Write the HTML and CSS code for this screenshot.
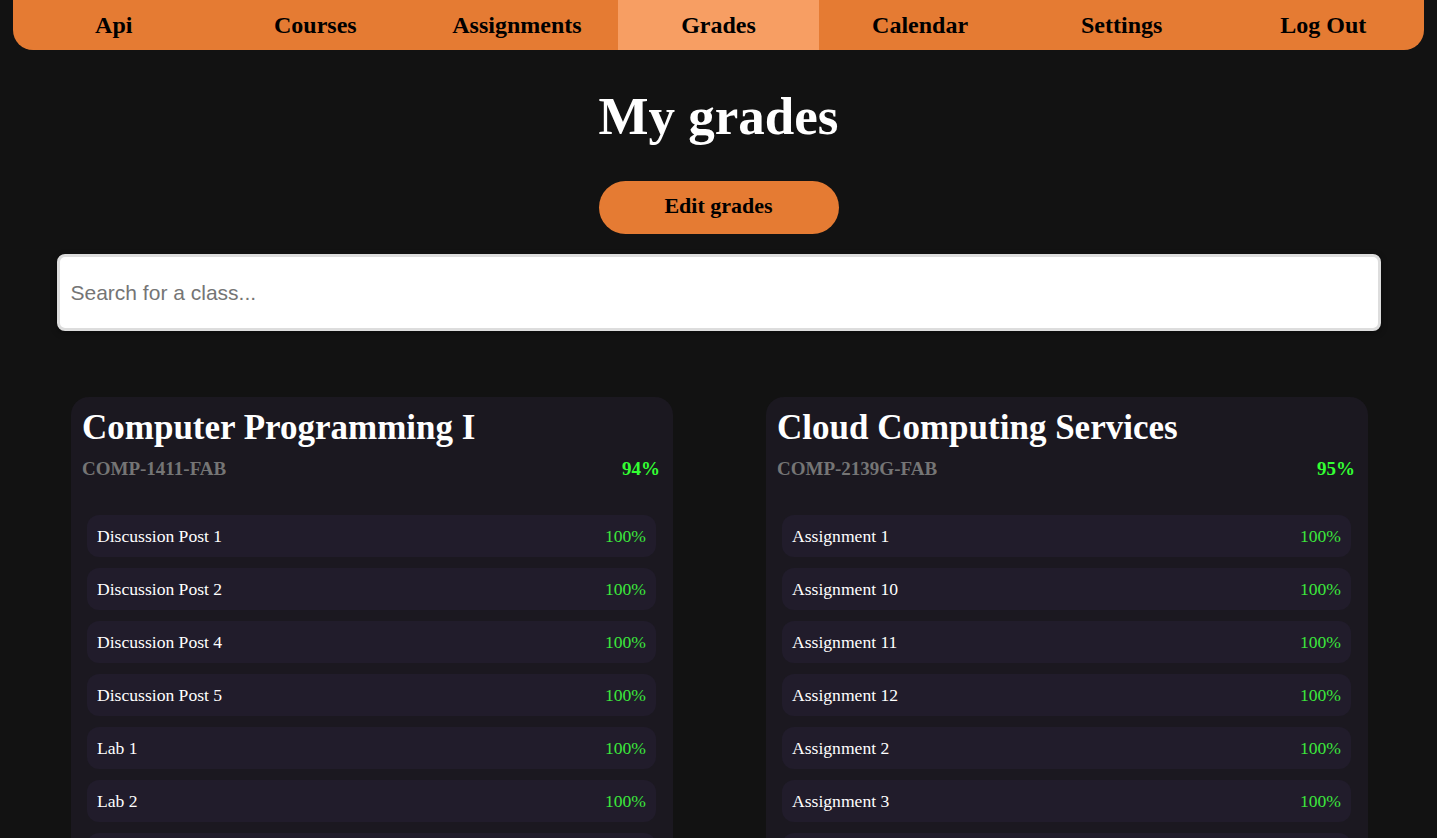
FILE: index.html
```html
<!DOCTYPE html>
<html lang="en">
<head>
<meta charset="utf-8">
<title>My grades</title>
<link rel="stylesheet" href="styles.css">
</head>
<body>
<nav class="nav">
  <a class="nav-item" href="#">Api</a>
  <a class="nav-item" href="#">Courses</a>
  <a class="nav-item" href="#">Assignments</a>
  <a class="nav-item active" href="#">Grades</a>
  <a class="nav-item" href="#">Calendar</a>
  <a class="nav-item" href="#">Settings</a>
  <a class="nav-item" href="#">Log Out</a>
</nav>
<main class="main">
  <h1 class="title">My grades</h1>
  <button class="edit-btn" type="button">Edit grades</button>
  <input class="search" type="text" placeholder="Search for a class...">
  <section class="cards">
    <article class="card">
      <h2 class="card-title">Computer Programming I</h2>
      <div class="card-meta"><span class="code">COMP-1411-FAB</span><span class="avg">94%</span></div>
      <ul class="rows">
        <li class="row"><span>Discussion Post 1</span><span class="pct">100%</span></li>
        <li class="row"><span>Discussion Post 2</span><span class="pct">100%</span></li>
        <li class="row"><span>Discussion Post 4</span><span class="pct">100%</span></li>
        <li class="row"><span>Discussion Post 5</span><span class="pct">100%</span></li>
        <li class="row"><span>Lab 1</span><span class="pct">100%</span></li>
        <li class="row"><span>Lab 2</span><span class="pct">100%</span></li>
        <li class="row"><span>Lab 3</span><span class="pct">100%</span></li>
      </ul>
    </article>
    <article class="card">
      <h2 class="card-title">Cloud Computing Services</h2>
      <div class="card-meta"><span class="code">COMP-2139G-FAB</span><span class="avg">95%</span></div>
      <ul class="rows">
        <li class="row"><span>Assignment 1</span><span class="pct">100%</span></li>
        <li class="row"><span>Assignment 10</span><span class="pct">100%</span></li>
        <li class="row"><span>Assignment 11</span><span class="pct">100%</span></li>
        <li class="row"><span>Assignment 12</span><span class="pct">100%</span></li>
        <li class="row"><span>Assignment 2</span><span class="pct">100%</span></li>
        <li class="row"><span>Assignment 3</span><span class="pct">100%</span></li>
        <li class="row"><span>Assignment 4</span><span class="pct">100%</span></li>
      </ul>
    </article>
  </section>
</main>
</body>
</html>
```

FILE: styles.css
```css
html {
  scrollbar-width: none;
}
body {
  margin: 0;
  background: #121212;
  color: #fff;
  font-family: "Liberation Serif", "Times New Roman", serif;
}
.nav {
  display: flex;
  margin: 0 13px;
  height: 50px;
  background: #e57b33;
  border-radius: 0 0 20px 20px;
  overflow: hidden;
}
.nav-item {
  flex: 1 1 0;
  display: flex;
  align-items: center;
  justify-content: center;
  color: #000;
  text-decoration: none;
  font-weight: bold;
  font-size: 24px;
}
.nav-item.active {
  background: #f79e63;
}
.main {
  display: flex;
  flex-direction: column;
  align-items: center;
}
.title {
  margin: 36px 0 0;
  font-size: 53px;
  font-weight: bold;
  line-height: normal;
}
.edit-btn {
  margin-top: 35px;
  width: 240px;
  height: 53px;
  padding: 0 0 4px;
  border: none;
  border-radius: 27px;
  background: #e57b33;
  color: #000;
  font-family: "Liberation Serif", "Times New Roman", serif;
  font-weight: bold;
  font-size: 22px;
}
.search {
  box-sizing: border-box;
  margin-top: 20px;
  width: 1324px;
  height: 77px;
  padding: 0 11px;
  border: 3px solid #dddddd;
  border-radius: 8px;
  background: #fff;
  box-shadow: 0 2px 6px rgba(0, 0, 0, 0.4);
  font-family: "Liberation Sans", Arial, sans-serif;
  font-size: 21px;
  color: #000;
  outline: none;
}
.search::placeholder {
  color: #757575;
}
.cards {
  display: grid;
  grid-template-columns: 602px 602px;
  column-gap: 93px;
  margin-top: 66px;
  margin-left: 2px;
}
.card {
  background: #1b1820;
  border-radius: 18px;
  padding: 11px 13px 20px 11px;
}
.card-title {
  margin: 0;
  font-size: 35px;
  font-weight: bold;
  line-height: normal;
}
.card-meta {
  display: flex;
  justify-content: space-between;
  margin-top: 10px;
  font-size: 19px;
  font-weight: bold;
}
.code {
  color: #757575;
}
.avg {
  color: #33ff33;
}
.rows {
  list-style: none;
  margin: 35px 4px 0 5px;
  padding: 0;
  display: flex;
  flex-direction: column;
  gap: 11px;
}
.row {
  display: flex;
  justify-content: space-between;
  padding: 11px 10px;
  background: #211c2b;
  border-radius: 12px;
  font-size: 17.6px;
  line-height: 20px;
}
.pct {
  color: #3ce83c;
}
```
